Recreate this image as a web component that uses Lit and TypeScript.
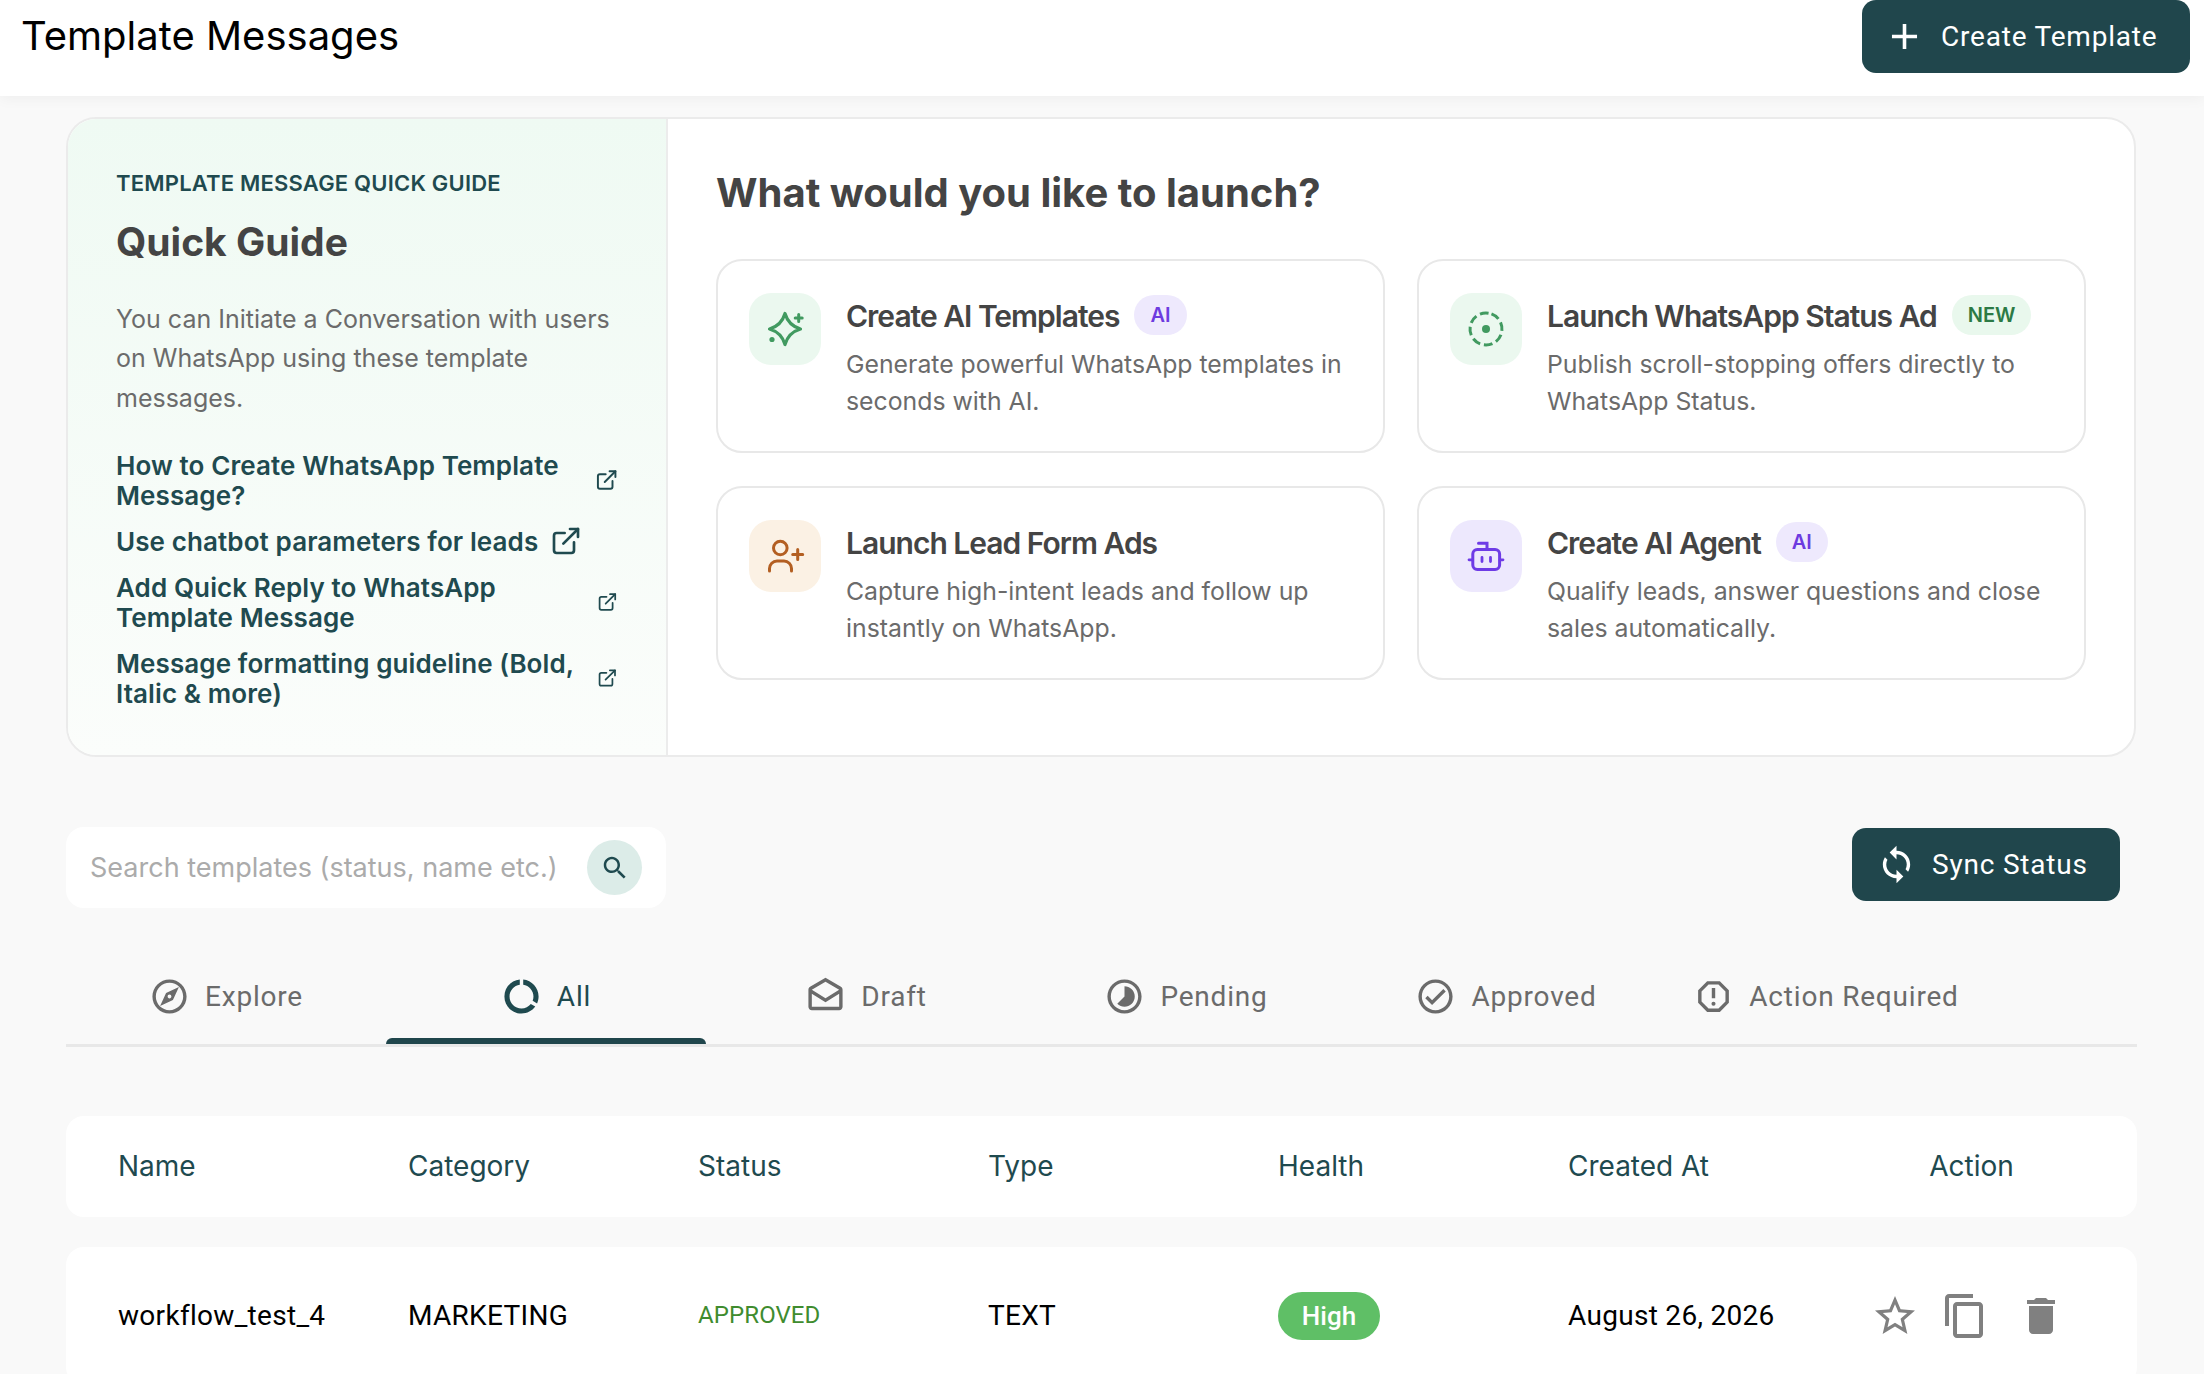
import { LitElement, html, css, svg } from "lit";
import { customElement } from "lit/decorators.js";

const mi = (d: string, size: number, cls = "") =>
  html`<svg class="mi ${cls}" style="width:${size}px;height:${size}px" viewBox="0 0 24 24" fill="currentColor"><path d=${d}></path></svg>`;

const P = {
  add: "M19 13h-6v6h-2v-6H5v-2h6V5h2v6h6v2z",
  search: "M15.5 14h-.79l-.28-.27C15.41 12.59 16 11.11 16 9.5 16 5.91 13.09 3 9.5 3S3 5.91 3 9.5 5.91 16 9.5 16c1.61 0 3.09-.59 4.23-1.57l.27.28v.79l5 4.99L20.49 19l-4.99-5zm-6 0C7.01 14 5 11.99 5 9.5S7.01 5 9.5 5 14 7.01 14 9.5 11.99 14 9.5 14z",
  sync: "M12 4V1L8 5l4 4V6c3.31 0 6 2.69 6 6 0 1.01-.25 1.97-.7 2.8l1.46 1.46C19.54 15.03 20 13.57 20 12c0-4.42-3.58-8-8-8zm0 14c-3.31 0-6-2.69-6-6 0-1.01.25-1.97.7-2.8L5.24 7.74C4.46 8.97 4 10.43 4 12c0 4.42 3.58 8 8 8v3l4-4-4-4v3z",
  explore: "M12 2C6.48 2 2 6.48 2 12s4.48 10 10 10 10-4.48 10-10S17.52 2 12 2zm0 18c-4.41 0-8-3.59-8-8s3.59-8 8-8 8 3.59 8 8-3.59 8-8 8zm-5.5-2.5l7.51-3.49L17.5 6.5 9.99 9.99 6.5 17.5zm5.5-6.6c.61 0 1.1.49 1.1 1.1s-.49 1.1-1.1 1.1-1.1-.49-1.1-1.1.49-1.1 1.1-1.1z",
  all: "M13 2.05v3.03c3.39.49 6 3.39 6 6.92 0 .9-.18 1.75-.48 2.54l2.6 1.53c.56-1.24.88-2.62.88-4.07 0-5.18-3.95-9.45-9-9.95zM12 19c-3.87 0-7-3.13-7-7 0-3.53 2.61-6.43 6-6.92V2.05c-5.06.5-9 4.76-9 9.95 0 5.52 4.47 10 9.99 10 3.31 0 6.24-1.61 8.06-4.09l-2.6-1.53C16.17 17.98 14.21 19 12 19z",
  draft: "M21.99 8c0-.72-.37-1.35-.94-1.7L12 1 2.95 6.3C2.38 6.65 2 7.28 2 8v10c0 1.1.9 2 2 2h16c1.1 0 2-.9 2-2l-.01-10zM12 3.32 19.99 8v.01L12 13 4 8l8-4.68zM4 18v-7.66l8 5.02 7.99-4.99L20 18H4z",
  pending: "M16.24 7.76C15.07 6.59 13.54 6 12 6v6l-4.24 4.24c2.34 2.34 6.14 2.34 8.49 0 2.34-2.34 2.34-6.14-.01-8.48zM12 2C6.48 2 2 6.48 2 12s4.48 10 10 10 10-4.48 10-10S17.52 2 12 2zm0 18c-4.42 0-8-3.58-8-8s3.58-8 8-8 8 3.58 8 8-3.58 8-8 8z",
  approved: "M12 2C6.48 2 2 6.48 2 12s4.48 10 10 10 10-4.48 10-10S17.52 2 12 2zm0 18c-4.41 0-8-3.59-8-8s3.59-8 8-8 8 3.59 8 8-3.59 8-8 8zm4.59-12.42L10 14.17l-2.59-2.58L6 13l4 4 8-8z",
  action: "M15.73 3H8.27L3 8.27v7.46L8.27 21h7.46L21 15.73V8.27L15.73 3zM19 14.9 14.9 19H9.1L5 14.9V9.1L9.1 5h5.8L19 9.1v5.8zM11 7h2v6h-2zM12 15a1.2 1.2 0 1 0 0 2.4 1.2 1.2 0 0 0 0-2.4z",
  star: "M22 9.24l-7.19-.62L12 2 9.19 8.63 2 9.24l5.46 4.73L5.82 21 12 17.27 18.18 21l-1.63-7.03L22 9.24zM12 15.4l-3.76 2.27 1-4.28-3.32-2.88 4.38-.38L12 6.1l1.71 4.04 4.38.38-3.32 2.88 1 4.28L12 15.4z",
  copy: "M16 1H4c-1.1 0-2 .9-2 2v14h2V3h12V1zm3 4H8c-1.1 0-2 .9-2 2v14c0 1.1.9 2 2 2h11c1.1 0 2-.9 2-2V7c0-1.1-.9-2-2-2zm0 16H8V7h11v14z",
  trash: "M6 19c0 1.1.9 2 2 2h8c1.1 0 2-.9 2-2V7H6v12zM19 4h-3.5l-1-1h-5l-1 1H5v2h14V4z",
};

const ext = html`<svg class="ext" viewBox="0 0 24 24" fill="none" stroke="currentColor" stroke-width="2" stroke-linecap="round" stroke-linejoin="round"><path d="M18 13v6a2 2 0 0 1-2 2H5a2 2 0 0 1-2-2V8a2 2 0 0 1 2-2h6"></path><path d="M15 3h6v6"></path><path d="M10 14 21 3"></path></svg>`;

const sparkIcon = svg`<path d="M20 4.5Q23.5 16.5 35.5 20Q23.5 23.5 20 35.5Q16.5 23.5 4.5 20Q16.5 16.5 20 4.5Z" fill="none" stroke-width="3.2" stroke-linejoin="round"></path><path d="M33.7 5.5v7M30.2 9h7" fill="none" stroke-width="3" stroke-linecap="round"></path><circle cx="7" cy="30.5" r="2.6" stroke="none" fill="currentColor"></circle>`;
const statusIcon = svg`<circle cx="20" cy="20" r="16" fill="none" stroke-width="3" stroke-dasharray="8.6 4" stroke-linecap="butt" transform="rotate(-70 20 20)"></circle><circle cx="20" cy="20" r="4" stroke="none" fill="currentColor"></circle>`;
const leadIcon = svg`<circle cx="15.3" cy="12" r="6.8" fill="none" stroke-width="3"></circle><path d="M4.5 35v-2.5a7.5 7.5 0 0 1 7.5-7.5h7a7.5 7.5 0 0 1 7.5 7.5V35" fill="none" stroke-width="3" stroke-linecap="round"></path><path d="M32.7 13.5v10M27.7 18.5h10" fill="none" stroke-width="3" stroke-linecap="round"></path>`;
const robotIcon = svg`<rect x="6.8" y="13.5" width="26.8" height="20" rx="4.5" fill="none" stroke-width="3"></rect><path d="M21 13V7.2H12.5" fill="none" stroke-width="3" stroke-linecap="round"></path><path d="M16 21.5v4M24.5 21.5v4M3 23.8h3M34 23.8h3" fill="none" stroke-width="2.8" stroke-linecap="round"></path>`;

const cards = [
  { cls: "green", icon: sparkIcon, title: "Create AI Templates", badge: "AI", bc: "purple", desc: "Generate powerful WhatsApp templates in seconds with AI." },
  { cls: "green", icon: statusIcon, title: "Launch WhatsApp Status Ad", badge: "NEW", bc: "mint", desc: "Publish scroll-stopping offers directly to WhatsApp Status." },
  { cls: "orange", icon: leadIcon, title: "Launch Lead Form Ads", badge: "", bc: "", desc: "Capture high-intent leads and follow up instantly on WhatsApp." },
  { cls: "violet", icon: robotIcon, title: "Create AI Agent", badge: "AI", bc: "purple", desc: "Qualify leads, answer questions and close sales automatically." },
];

const links = [
  "How to Create WhatsApp Template Message?",
  "Use chatbot parameters for leads",
  "Add Quick Reply to WhatsApp Template Message",
  "Message formatting guideline (Bold, Italic & more)",
];

const tabs = [
  { label: "Explore", icon: P.explore },
  { label: "All", icon: P.all, active: true },
  { label: "Draft", icon: P.draft },
  { label: "Pending", icon: P.pending },
  { label: "Approved", icon: P.approved },
  { label: "Action Required", icon: P.action },
];

const heads = ["Name", "Category", "Status", "Type", "Health", "Created At"];

@customElement("app-root")
export class AppRoot extends LitElement {
  static styles = css`
    :host {
      display: block;
      height: 100vh;
      overflow: hidden;
      background: #f9f9f9;
      font-family: Inter, "Liberation Sans", sans-serif;
      color: #000;
    }
    svg { display: block; flex: none; }
    .mi { flex: none; }
    .topbar {
      position: relative;
      height: 96px;
      box-sizing: border-box;
      background: #fff;
      box-shadow: 0 2px 14px rgba(0, 0, 0, 0.05);
      display: flex;
      justify-content: space-between;
      align-items: flex-start;
      padding: 0 14px 0 21px;
    }
    .page-title { font-size: 40px; line-height: 72px; font-weight: 400; margin: 0; }
    .btn {
      display: flex;
      align-items: center;
      background: #20464c;
      color: #fff;
      border-radius: 14px;
      box-sizing: border-box;
      font-family: Roboto, sans-serif;
      font-size: 28px;
      letter-spacing: 0.8px;
    }
    .create { width: 328px; height: 73px; padding-left: 21px; gap: 15px; }
    .main { padding: 21px 67px 0 66px; }
    .guide {
      display: grid;
      grid-template-columns: 600px 1fr;
      height: 640px;
      box-sizing: border-box;
      margin-right: 1px;
      background: #fff;
      border: 2px solid #ebebeb;
      border-radius: 30px;
      overflow: hidden;
    }
    .left {
      background: linear-gradient(180deg, #effaf3 0%, #fbfdfb 100%);
      border-right: 2px solid #ececec;
      padding: 50px 0 0 48px;
      box-sizing: border-box;
    }
    .eyebrow { font-size: 22px; line-height: 28px; font-weight: 600; color: #1f4a4f; text-transform: uppercase; letter-spacing: 0.2px; }
    .qg { font-size: 39px; line-height: 50px; font-weight: 700; color: #444; margin: 20px 0 0; }
    .intro { font-size: 25px; line-height: 39.4px; color: #6b6b6b; margin: 33px 0 0; width: 510px; }
    .links { display: flex; flex-direction: column; gap: 16px; width: 502px; margin-top: 33px; }
    .link { display: flex; align-items: center; gap: 12px; font-size: 26px; line-height: 30px; font-weight: 600; letter-spacing: 0.1px; color: #1f4a4f; }
    .ext { width: 32px; height: 32px; flex: 0 1.4 32px; min-width: 0; margin: -5px 0 -3px; }
    .right { padding: 48px 48px 0 48px; }
    .right h2 { font-size: 40px; line-height: 52px; font-weight: 700; color: #444; margin: 0 0 40px; }
    .grid { display: grid; grid-template-columns: 1fr 1fr; gap: 33px 32px; }
    .card {
      display: flex;
      gap: 25px;
      height: 194px;
      box-sizing: border-box;
      border: 2px solid #e8e8e8;
      border-radius: 26px;
      padding: 32px 20px 0 31px;
    }
    .tile { width: 72px; height: 72px; border-radius: 22px; display: flex; align-items: center; justify-content: center; flex: none; }
    .tile.green { background: #ebf8ef; color: #419a60; stroke: #419a60; }
    .tile.orange { background: #fbf1e4; color: #b35f22; stroke: #b35f22; }
    .tile.violet { background: #ede8fd; color: #6e3be6; stroke: #6e3be6; }
    .tile svg { width: 40px; height: 40px; }
    .ct { display: flex; align-items: center; gap: 15px; height: 44px; }
    .ct span.t { font-size: 30px; line-height: 46px; font-weight: 600; letter-spacing: -1px; color: #444; white-space: nowrap; margin-top: 1px; }
    .badge { display: flex; align-items: center; justify-content: center; height: 40px; padding: 0 16px; border-radius: 20px; font-size: 20px; font-weight: 600; }
    .badge.purple { background: #eee9fd; color: #6d3be0; }
    .badge.mint { background: #e9f8ed; color: #2c7a45; }
    .cd { font-size: 24.8px; line-height: 37px; color: #6b6b6b; margin: 9px 0 0; }
    .tools { display: flex; justify-content: space-between; align-items: flex-start; margin-top: 70px; padding-right: 17px; }
    .search {
      width: 600px;
      height: 81px;
      box-sizing: border-box;
      background: #fff;
      border-radius: 18px;
      display: flex;
      align-items: center;
      justify-content: space-between;
      padding: 0 24px;
      font-size: 27px;
      color: #ababab;
      white-space: nowrap;
    }
    .sbtn { width: 55px; height: 55px; border-radius: 50%; background: #dcece8; color: #1f4a4f; display: flex; align-items: center; justify-content: center; flex: none; }
    .sync { width: 268px; height: 73px; padding-left: 24px; gap: 15px; margin-top: 1px; }
    .tabs { display: flex; margin-top: 46px; border-bottom: 3px solid #e8e8e8; }
    .tab { width: 320px; display: flex; flex-direction: column; color: #6b6b6b; }
    .tab.on { color: #1f4a4f; }
    .tab-in { height: 84px; display: flex; align-items: center; justify-content: center; gap: 15px; font-family: Roboto, sans-serif; font-size: 28px; letter-spacing: 0.8px; }
    .bar { height: 6px; border-radius: 6px 6px 0 0; }
    .tab.on .bar { background: #20464c; }
    .thead, .trow {
      display: grid;
      grid-template-columns: repeat(6, 290px) 1fr;
      align-items: center;
      background: #fff;
      padding: 0 52px;
    }
    .thead { height: 101px; box-sizing: border-box; padding-bottom: 2px; margin-top: 69px; border-radius: 18px; color: #1f4a4f; font-size: 28px; }
    .thead .act { text-align: center; }
    .trow { height: 138px; box-sizing: border-box; padding-bottom: 2px; margin-top: 30px; border-radius: 18px; font-family: Roboto, sans-serif; font-size: 28px; letter-spacing: 0.3px; color: #000; }
    .status { color: #3f8c2f; font-size: 24px; letter-spacing: 0.1px; }
    .pill { width: 102px; height: 48px; margin-top: 2px; border-radius: 24px; background: #5fbf66; color: #fff; font-size: 26px; letter-spacing: 0; font-weight: 500; display: flex; align-items: center; justify-content: center; }
    .acts { display: flex; color: #808080; padding: 2px 0 0 13px; }
    .acts .c { margin-left: 22px; }
    .acts .d { margin-left: 28px; }
  `;

  render() {
    return html`
      <header class="topbar">
        <h1 class="page-title">Template Messages</h1>
        <div class="btn create">${mi(P.add, 43)}<span>Create Template</span></div>
      </header>
      <main class="main">
        <section class="guide">
          <div class="left">
            <div class="eyebrow">Template Message Quick Guide</div>
            <h2 class="qg">Quick Guide</h2>
            <p class="intro">You can Initiate a Conversation with users on WhatsApp using these template messages.</p>
            <div class="links">
              ${links.map((l) => html`<div class="link"><span>${l}</span>${ext}</div>`)}
            </div>
          </div>
          <div class="right">
            <h2>What would you like to launch?</h2>
            <div class="grid">
              ${cards.map(
                (c) => html`<div class="card">
                  <div class="tile ${c.cls}"><svg viewBox="0 0 40 40">${c.icon}</svg></div>
                  <div>
                    <div class="ct"><span class="t">${c.title}</span>${c.badge ? html`<span class="badge ${c.bc}">${c.badge}</span>` : ""}</div>
                    <p class="cd">${c.desc}</p>
                  </div>
                </div>`
              )}
            </div>
          </div>
        </section>
        <div class="tools">
          <div class="search"><span>Search templates (status, name etc.)</span><div class="sbtn">${mi(P.search, 30)}</div></div>
          <div class="btn sync">${mi(P.sync, 41)}<span>Sync Status</span></div>
        </div>
        <nav class="tabs">
          ${tabs.map(
            (t) => html`<div class="tab ${t.active ? "on" : ""}">
              <div class="tab-in">${mi(t.icon, 41)}<span>${t.label}</span></div>
              <div class="bar"></div>
            </div>`
          )}
        </nav>
        <div class="thead">
          ${heads.map((h) => html`<div>${h}</div>`)}
          <div class="act">Action</div>
        </div>
        <div class="trow">
          <div>workflow_test_4</div>
          <div>MARKETING</div>
          <div class="status">APPROVED</div>
          <div>TEXT</div>
          <div><div class="pill">High</div></div>
          <div>August 26, 2026</div>
          <div class="acts">${mi(P.star, 48)}${mi(P.copy, 48, "c")}${mi(P.trash, 48, "d")}</div>
        </div>
      </main>
    `;
  }
}
